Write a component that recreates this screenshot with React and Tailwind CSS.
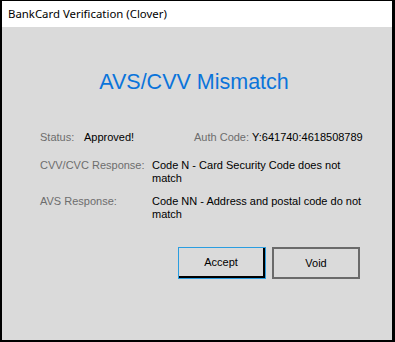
export default function App() {
  return (
    <div
      className="w-[395px] h-[342px] flex flex-col bg-[#dadada] border-t border-l-2 border-r-[3px] border-b-2 border-black overflow-hidden"
      style={{ fontFamily: '"Liberation Sans", Arial, sans-serif' }}
    >
      <div
        className="h-[26px] bg-white flex items-center pl-[6px] text-[11.4px] text-black"
        style={{ fontFamily: '"Noto Sans", "Open Sans", sans-serif' }}
      >
        BankCard Verification (Clover)
      </div>

      <div className="flex-1 flex flex-col">
        <h1 className="mt-[42px] text-center text-[21.5px] leading-[26px] text-[#0a74da] pr-[6px]">
          AVS/CVV Mismatch
        </h1>

        <div className="mt-[36px] pl-[38px] text-[11px] leading-[13px]">
          <div className="flex">
            <span className="w-[44px] text-[#6d6d6d]">Status:</span>
            <span className="w-[110px] text-black">Approved!</span>
            <span className="w-[58px] text-[#6d6d6d]">Auth Code:</span>
            <span className="text-black">Y:641740:4618508789</span>
          </div>

          <div className="flex mt-[15px]">
            <span className="w-[112px] text-[#6d6d6d]">CVV/CVC Response:</span>
            <span className="w-[212px] text-black">Code N - Card Security Code does not match</span>
          </div>

          <div className="flex mt-[10px]">
            <span className="w-[112px] text-[#6d6d6d]">AVS Response:</span>
            <span className="w-[212px] text-black">Code NN - Address and postal code do not match</span>
          </div>
        </div>

        <div className="mt-[26px] flex gap-[6px] pl-[176px]">
          <button className="w-[88px] h-[32px] border border-[#2a9de0] bg-[#dadada] text-[11px] text-black">
            <div className="w-full h-full flex items-center justify-center border-r-2 border-b-2 border-black">
              Accept
            </div>
          </button>
          <button className="w-[88px] h-[32px] border-2 border-[#6a6a6a] bg-[#dadada] text-[11px] text-black flex items-center justify-center">
            Void
          </button>
        </div>
      </div>
    </div>
  )
}
